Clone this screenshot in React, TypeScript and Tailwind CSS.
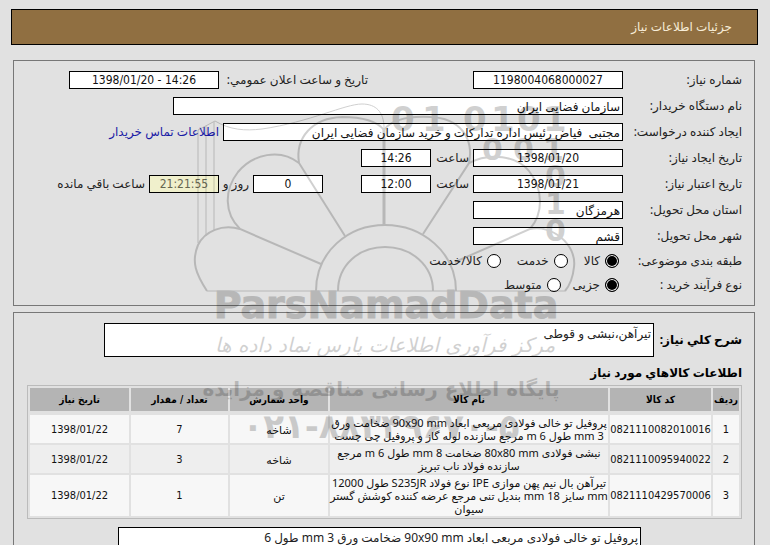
import type { InputHTMLAttributes, ReactNode } from "react";

const box = "h-[18px] border border-black px-0.5 text-xs leading-4 outline-none";
const textBox = `${box} bg-white text-[#111]`;
const numberBox = `${box} bg-white text-center text-[#111] font-['DejaVu_Sans_Condensed','DejaVu_Sans',sans-serif]`;

interface BoxProps extends InputHTMLAttributes<HTMLInputElement> {
  numeric?: boolean;
}

function Box({ className = "", numeric = false, ...rest }: BoxProps) {
  return <input type="text" className={`${numeric ? numberBox : textBox} ${className}`} {...rest} />;
}

function Row({ label, htmlFor, children }: { label: string; htmlFor: string; children: ReactNode }) {
  return (
    <div className="flex h-[18px] items-center gap-1">
      <label htmlFor={htmlFor} className="w-[115px] shrink-0 whitespace-nowrap">
        {label}
      </label>
      {children}
    </div>
  );
}

function Choice({ name, label, checked }: { name: string; label: string; checked?: boolean }) {
  return (
    <label className="flex items-center gap-[5px] whitespace-nowrap">
      <input
        type="radio"
        name={name}
        defaultChecked={checked}
        className="size-[14px] appearance-none rounded-full border border-black bg-white checked:bg-black checked:shadow-[inset_0_0_0_1px_white]"
      />
      {label}
    </label>
  );
}

const items = [
  {
    code: "0821110082010016",
    name: ["پروفیل تو خالی فولادی مربعی ابعاد 90x90 mm ضخامت ورق", "3 mm طول 6 m مرجع سازنده لوله گاز و پروفیل چی چست"],
    unit: "شاخه",
    count: "7",
    date: "1398/01/22",
  },
  {
    code: "0821110095940022",
    name: ["نبشی فولادی 80x80 mm ضخامت 8 mm طول 6 m مرجع", "سازنده فولاد ناب تبریز"],
    unit: "شاخه",
    count: "3",
    date: "1398/01/22",
  },
  {
    code: "0821110429570006",
    name: ["تیرآهن بال نیم پهن موازی IPE نوع فولاد S235JR طول 12000", "mm سایز 18 mm بندیل تنی مرجع عرضه کننده کوشش گستر", "سیوان"],
    unit: "تن",
    count: "1",
    date: "1398/01/22",
  },
];

const columns = [
  { title: "ردیف", width: "w-[26px]" },
  { title: "کد کالا", width: "w-[101px]" },
  { title: "نام کالا", width: "" },
  { title: "واحد شمارش", width: "w-[98px]" },
  { title: "تعداد / مقدار", width: "w-[97px]" },
  { title: "تاریخ نیاز", width: "w-[99px]" },
];

function Watermark() {
  return (
    <svg
      viewBox="0 0 770 545"
      width="770"
      height="545"
      direction="ltr"
      aria-hidden="true"
      className="pointer-events-none absolute top-0 left-0 opacity-[0.18]"
    >
      <g fill="none" stroke="black" strokeWidth="2">
        <path d="M316 291C316 252 348 225 385 225S456 252 456 291" />
        <path d="M338 291C338 265 359 247 385 247S433 265 433 291" />
        <path strokeWidth="3" d="M384 225V128" />
        <path strokeWidth="1" d="M207 291H565" />
        <path strokeWidth="1" d="M384 128C384 112 376 104 362 104C345 104 310 122 262 129C245 131 230 130 215 121L198 130V243M206 126V236M214 122V231" />
        <path d="M345 236L299 163C295 138 312 118 342 117C360 117 376 120 384 130" />
        <path d="M423 234L469 163C474 138 460 118 430 117C408 116 392 119 384 130" />
        <path d="M321 264L240 229C224 213 224 190 238 172C253 154 280 148 299 163" />
        <path d="M455 262L530 229C543 214 544 190 529 171C517 156 490 152 469 163" />
        <path d="M240 229C222 224 205 231 198 245C191 262 196 274 207 291" />
        <path d="M530 229C551 224 577 244 574 267C573 277 570 285 565 291" />
      </g>
      <g fill="black" fontFamily="'DejaVu Sans', sans-serif" fontWeight="bold">
        <text y="131" fontSize="34">
          <tspan x="391">0</tspan>
          <tspan x="422">1</tspan>
          <tspan x="463">0</tspan>
          <tspan x="491">1</tspan>
          <tspan x="517">0</tspan>
          <tspan x="543">1</tspan>
        </text>
        <text y="160" fontSize="30">
          <tspan x="482">0</tspan>
          <tspan x="513">0</tspan>
          <tspan x="543">1</tspan>
        </text>
        <text y="187" x="545" fontSize="30">0</text>
        <text y="214" x="545" fontSize="30">1</text>
        <text y="241" x="545" fontSize="30">0</text>
        <text x="386" y="318" fontSize="38" stroke="black" strokeWidth="1" textAnchor="middle">ParsNamadData</text>
        <text x="385" y="352" fontSize="20" fontWeight="normal" fontStyle="italic" textAnchor="middle">
          مرکز فرآوری اطلاعات پارس نماد داده ها
        </text>
        <text x="381" y="396" fontSize="20" textAnchor="middle">پایگاه اطلاع رسانی مناقصه و مزایده</text>
        <text x="381" y="438" fontSize="34" textAnchor="middle">۰۲۱-۸۸۳۴۹۶۷۰-۵</text>
      </g>
    </svg>
  );
}

export default function App() {
  return (
    <div
      dir="rtl"
      className="relative h-screen overflow-hidden bg-[#e1e1e1] pt-[9px] pr-3 pl-[11px] font-['Noto_Sans','DejaVu_Sans',sans-serif] text-xs leading-4 text-[#222]"
    >
      <header className="flex h-9 items-center border border-black bg-[#906f41] px-[25px]">
        <h1 className="text-[#f7edd8]">جزئیات اطلاعات نیاز</h1>
      </header>

      <main className="mt-[15px] mr-[3px] ml-0.5 flex flex-col gap-1.5">
        <section className="flex flex-col gap-2 border border-[#777] px-3 pt-2.5 pb-3">
          <Row label="شماره نیاز:" htmlFor="number">
            <Box numeric id="number" className="w-[150px]" defaultValue="1198004068000027" />
            <div className="mr-[101px] flex items-center gap-1">
              <label htmlFor="announced" className="w-[145px] whitespace-nowrap">تاریخ و ساعت اعلان عمومي:</label>
              <Box numeric id="announced" dir="ltr" className="w-[150px]" defaultValue="1398/01/20 - 14:26" />
            </div>
          </Row>
          <Row label="نام دستگاه خریدار:" htmlFor="buyer">
            <Box id="buyer" className="w-[450px]" defaultValue="سازمان فضایی ایران" />
          </Row>
          <Row label="ایجاد کننده درخواست:" htmlFor="creator">
            <Box id="creator" className="w-[400px]" defaultValue="مجتبی  فیاض رئیس اداره تدارکات و خرید سازمان فضایی ایران" />
            <a href="#contact" className="whitespace-nowrap text-[#1a1aa6]">اطلاعات تماس خریدار</a>
          </Row>
          <Row label="تاریخ ایجاد نیاز:" htmlFor="created">
            <Box numeric id="created" className="w-[150px]" defaultValue="1398/01/20" />
            <label htmlFor="createdTime" className="w-[34px]">ساعت</label>
            <Box numeric id="createdTime" className="w-[70px]" defaultValue="14:26" />
          </Row>
          <Row label="تاریخ اعتبار نیاز:" htmlFor="expires">
            <Box numeric id="expires" className="w-[150px]" defaultValue="1398/01/21" />
            <label htmlFor="expiresTime" className="w-[34px]">ساعت</label>
            <Box numeric id="expiresTime" className="w-[70px]" defaultValue="12:00" />
            <Box numeric aria-label="روز" className="mr-[34px] w-[70px]" defaultValue="0" />
            <span className="w-[26px] whitespace-nowrap">روز و</span>
            <input
              type="text"
              id="remaining"
              readOnly
              className="h-[18px] w-[70px] border border-black bg-[#f0f0cc] text-center font-['DejaVu_Sans_Condensed','DejaVu_Sans',sans-serif] text-xs leading-4 text-[#666650]"
              defaultValue="21:21:55"
            />
            <label htmlFor="remaining" className="whitespace-nowrap">ساعت باقي مانده</label>
          </Row>
          <Row label="استان محل تحویل:" htmlFor="province">
            <Box id="province" className="w-[150px]" defaultValue="هرمزگان" />
          </Row>
          <Row label="شهر محل تحویل:" htmlFor="city">
            <Box id="city" className="w-[150px]" defaultValue="قشم" />
          </Row>
          <div role="radiogroup" aria-label="طبقه بندی موضوعی" className="flex h-4 items-center">
            <span className="w-[123px] whitespace-nowrap">طبقه بندی موضوعی:</span>
            <div className="flex gap-4">
              <Choice name="subject" label="کالا" checked />
              <Choice name="subject" label="خدمت" />
              <Choice name="subject" label="کالا/خدمت" />
            </div>
          </div>
          <div role="radiogroup" aria-label="نوع فرآیند خرید" className="flex h-4 items-center">
            <span className="w-[123px] whitespace-nowrap">نوع فرآیند خرید :</span>
            <div className="flex gap-3">
              <Choice name="process" label="جزیی" checked />
              <Choice name="process" label="متوسط" />
            </div>
          </div>
        </section>

        <section className="border border-[#777] px-3 pt-2.5">
          <div className="flex items-center gap-1">
            <label htmlFor="summary" className="w-[84px] shrink-0 font-bold whitespace-nowrap text-black">
              شرح کلي نیاز:
            </label>
            <textarea
              id="summary"
              className="h-[34px] w-[550px] resize-none border border-black bg-white px-0.5 pt-0.5 leading-4 outline-none"
              defaultValue="تیرآهن،نبشی و قوطی"
            />
          </div>
          <h2 className="mt-2 font-bold text-black">اطلاعات کالاهاي مورد نیاز</h2>
          <div className="mt-1 ml-px border border-[#bbb]">
            <table className="w-full table-fixed border-separate border-spacing-0.5 text-center font-['DejaVu_Sans_Condensed','DejaVu_Sans',sans-serif] text-[11px] leading-[13px] text-[#111]">
              <thead>
                <tr className="h-[25px]">
                  {columns.map((c) => (
                    <th key={c.title} className={`border-b-2 border-[#e1e1e1] bg-[#b4b4b4] text-[10px] whitespace-nowrap text-black ${c.width}`}>
                      {c.title}
                    </th>
                  ))}
                </tr>
              </thead>
              <tbody>
                {items.map((item, i) => (
                  <tr key={item.code} className="bg-[#f7f7f7] even:bg-[#eee]">
                    <td>{i + 1}</td>
                    <td>{item.code}</td>
                    <td className="py-px font-['Noto_Sans','DejaVu_Sans',sans-serif] whitespace-nowrap">
                      {item.name.map((line) => (
                        <p key={line} className="h-[13px]">{line}</p>
                      ))}
                    </td>
                    <td className="font-['Noto_Sans','DejaVu_Sans',sans-serif]">{item.unit}</td>
                    <td>{item.count}</td>
                    <td>{item.date}</td>
                  </tr>
                ))}
              </tbody>
            </table>
          </div>
          <textarea
            aria-label="شرح کالا"
            className="mt-2 mr-[101px] block h-[34px] w-[523px] resize-none border border-black bg-white px-0.5 pt-0.5 leading-4 outline-none"
            defaultValue="پروفیل تو خالی فولادی مربعی ابعاد 90x90 mm ضخامت ورق 3 mm طول 6"
          />
        </section>
      </main>
      <Watermark />
    </div>
  );
}
